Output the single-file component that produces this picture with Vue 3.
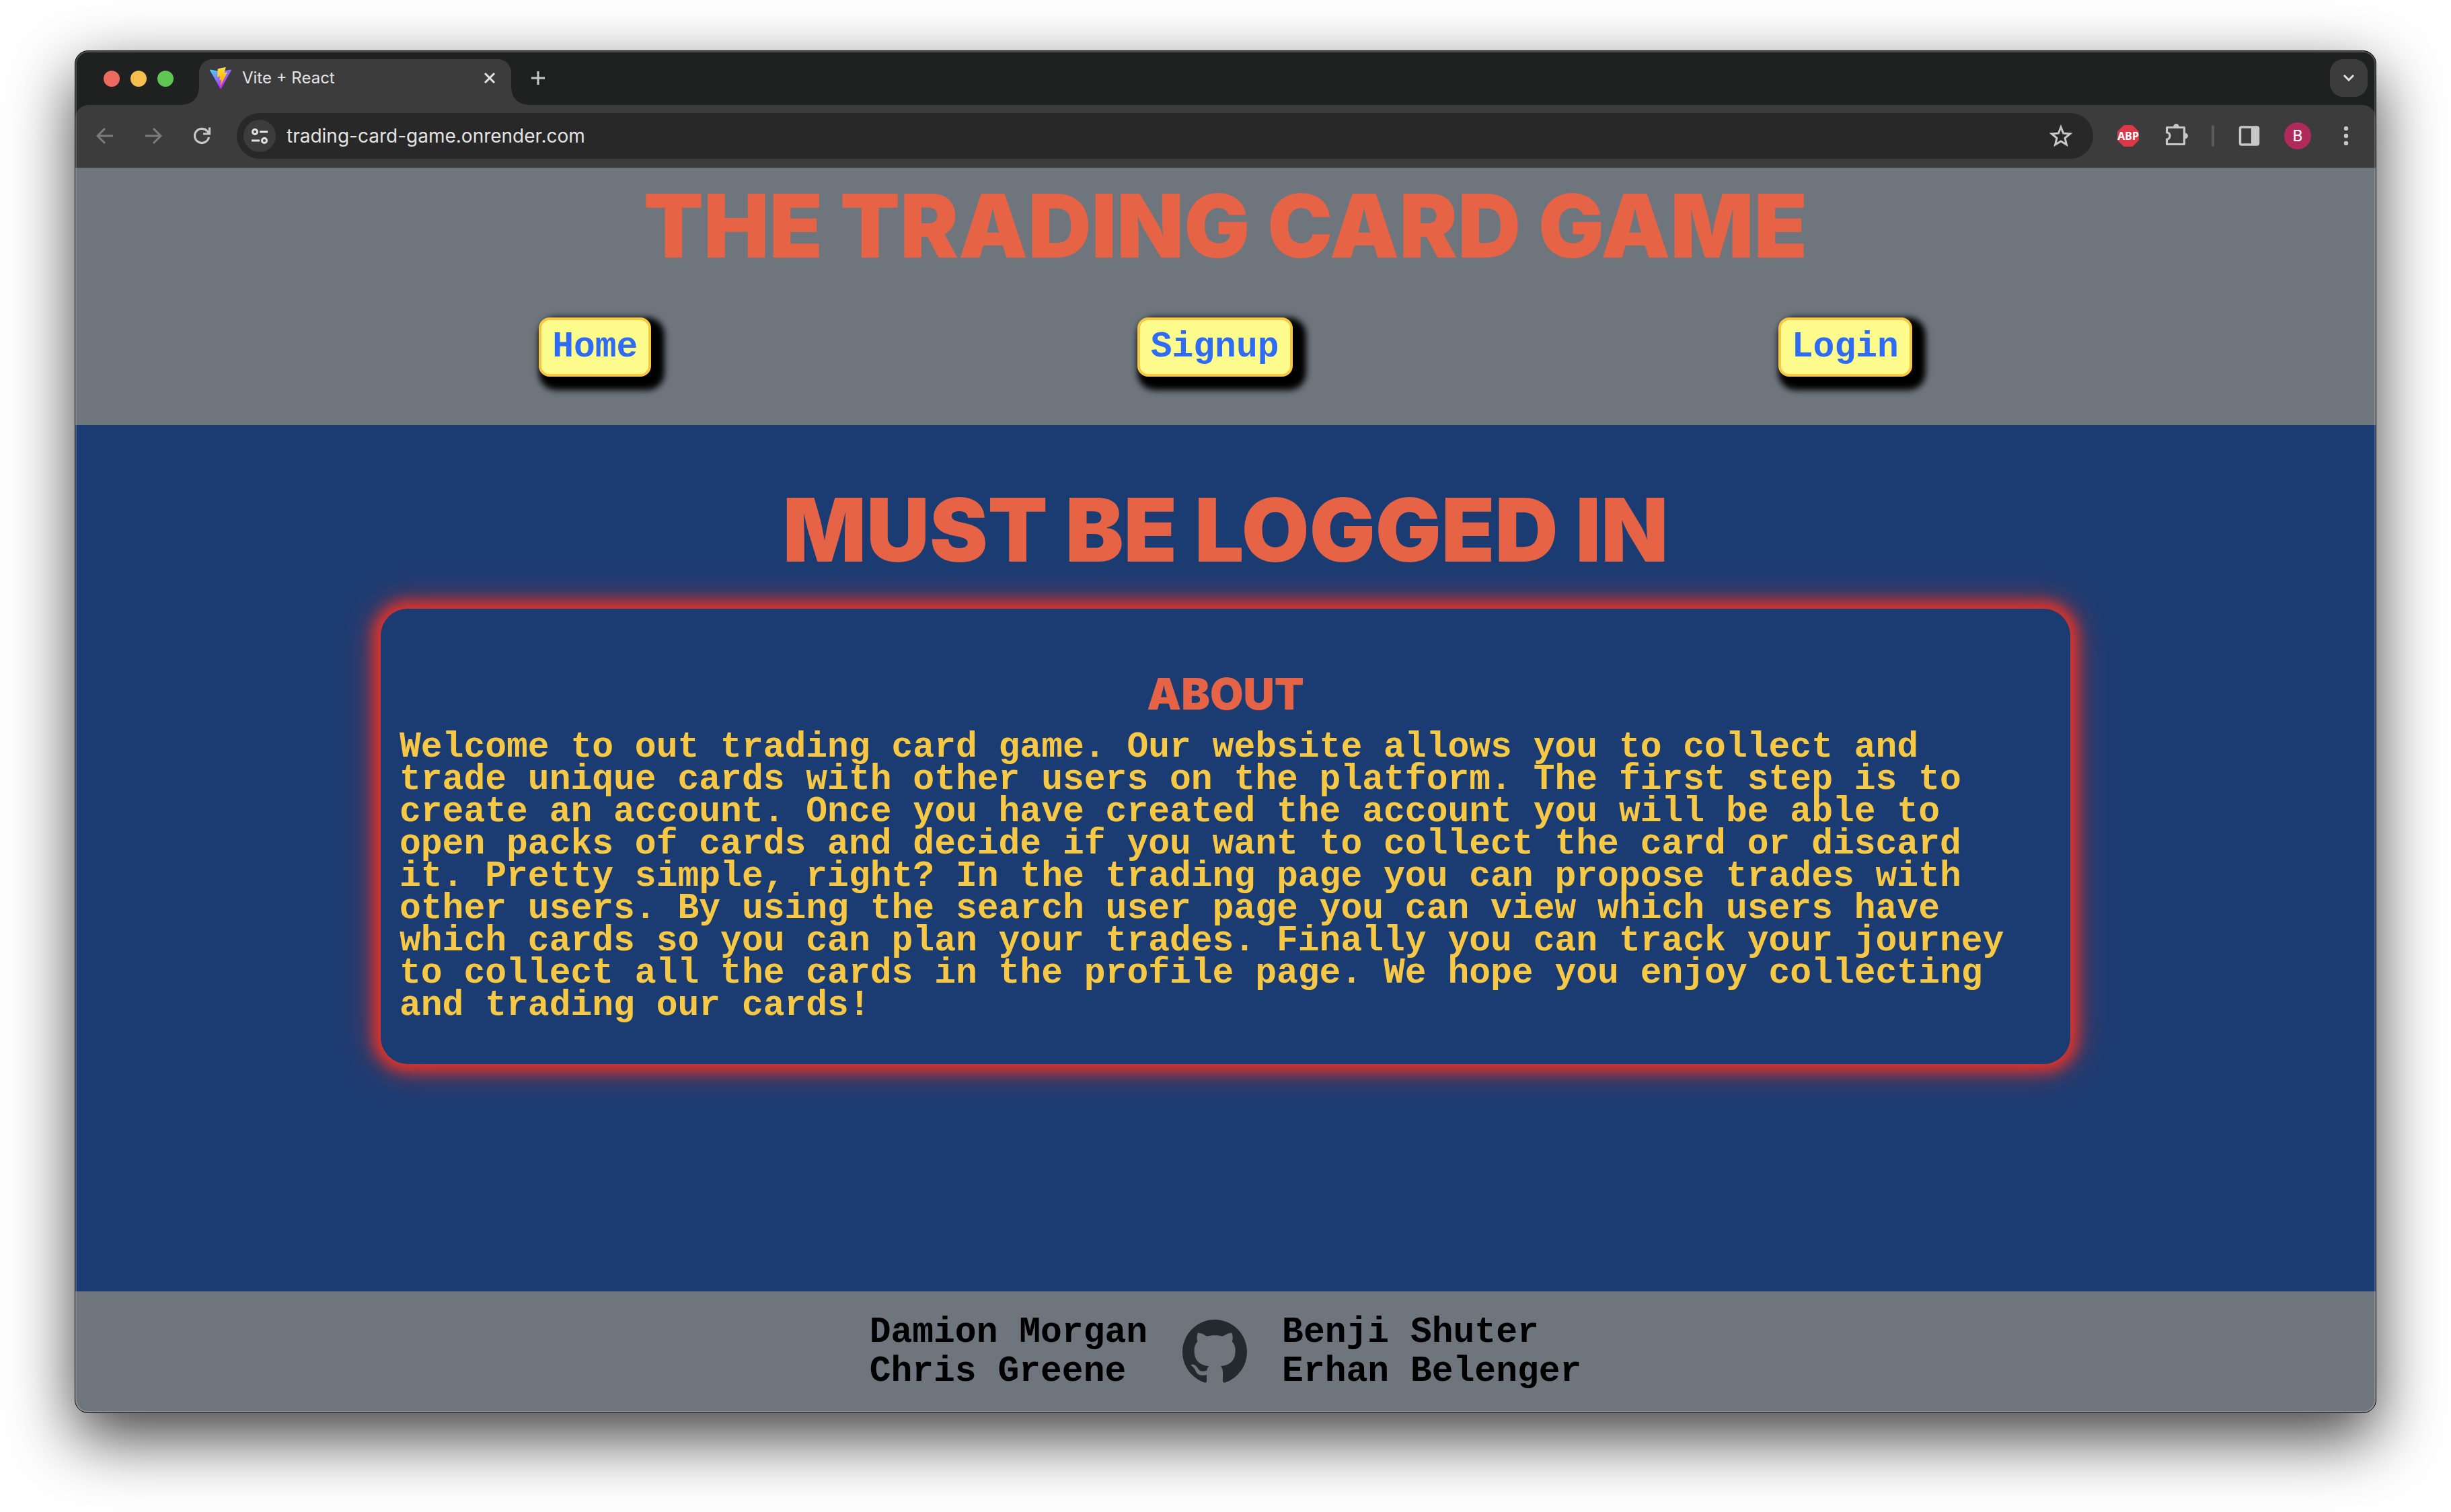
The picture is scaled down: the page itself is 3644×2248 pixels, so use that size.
<script setup>
import { ref } from 'vue'

const address = ref('trading-card-game.onrender.com')
const links = ['Home', 'Signup', 'Login']
const authors = [
  ['Damion Morgan', 'Chris Greene'],
  ['Benji Shuter', 'Erhan Belenger'],
]
</script>

<template>
  <div class="window">
    <div class="tab-strip">
      <div class="lights">
        <span class="light red"></span>
        <span class="light amber"></span>
        <span class="light green"></span>
      </div>
      <div class="tab">
        <svg class="favicon" viewBox="0 0 256 257" aria-hidden="true">
          <defs>
            <linearGradient id="vite-shield" x1="-.8%" x2="57.6%" y1="7.7%" y2="78.4%">
              <stop offset="0" stop-color="#41d1ff" />
              <stop offset="1" stop-color="#bd34fe" />
            </linearGradient>
            <linearGradient id="vite-bolt" x1="43.4%" x2="50.3%" y1="2.2%" y2="89%">
              <stop offset="0" stop-color="#ffea83" />
              <stop offset=".08" stop-color="#ffdd35" />
              <stop offset="1" stop-color="#ffa800" />
            </linearGradient>
          </defs>
          <path fill="url(#vite-shield)" d="M255.153 37.938 134.897 252.976c-2.483 4.44-8.862 4.466-11.382.048L.875 37.958c-2.746-4.814 1.371-10.646 6.827-9.67l120.385 21.517a6.537 6.537 0 0 0 2.322-.004l117.867-21.483c5.438-.991 9.574 4.796 6.877 9.62Z" />
          <path fill="url(#vite-bolt)" d="M185.432.063 96.44 17.501a3.268 3.268 0 0 0-2.634 3.014l-5.474 92.456a3.268 3.268 0 0 0 3.997 3.378l24.777-5.718c2.318-.535 4.413 1.507 3.936 3.838l-7.361 36.047c-.495 2.426 1.782 4.5 4.151 3.78l15.304-4.649c2.372-.72 4.652 1.36 4.15 3.788l-11.698 56.621c-.732 3.542 3.979 5.473 5.943 2.437l1.313-2.028 72.516-144.72c1.215-2.423-.88-5.186-3.54-4.672l-25.505 4.922c-2.396.462-4.435-1.77-3.759-4.114l16.646-57.705c.677-2.35-1.37-4.583-3.769-4.113Z" />
        </svg>
        <span class="tab-title">Vite + React</span>
        <button class="icon-button" aria-label="Close tab">
          <svg width="20" height="20" viewBox="0 0 20 20"><path d="M3 3l14 14M17 3L3 17" stroke="#e3e3e3" stroke-width="3" /></svg>
        </button>
      </div>
      <button class="icon-button new-tab" aria-label="New tab">
        <svg width="20" height="20" viewBox="0 0 20 20"><path d="M10 0v20M0 10h20" stroke="#c7c7c7" stroke-width="3" /></svg>
      </button>
      <button class="icon-button tab-search" aria-label="Search tabs">
        <svg width="20" height="20" viewBox="0 0 20 20"><path d="M3 6l7 7 7-7" fill="none" stroke="#e3e3e3" stroke-width="3" /></svg>
      </button>
    </div>

    <div class="toolbar">
      <button class="icon-button" aria-label="Back">
        <svg width="40" height="40" viewBox="0 0 40 40"><path d="M32 20H10M20 9L9 20l11 11" fill="none" stroke="#7c7c7c" stroke-width="3" /></svg>
      </button>
      <button class="icon-button" aria-label="Forward">
        <svg width="40" height="40" viewBox="0 0 40 40"><path d="M8 20h22M20 9l11 11-11 11" fill="none" stroke="#7c7c7c" stroke-width="3" /></svg>
      </button>
      <button class="icon-button" aria-label="Reload">
        <svg width="40" height="40" viewBox="0 0 40 40"><path d="M30.500 22A10.600 10.600 0 1 1 28 12.800l2.500 2.700M31.500 7.500v9.500h-9.500" fill="none" stroke="#c7c7c7" stroke-width="3.200" /></svg>
      </button>
      <div class="omnibox">
        <button class="icon-button site-info" aria-label="View site information">
          <svg width="28" height="28" viewBox="0 0 28 28" fill="none" stroke="#e3e3e3" stroke-width="3"><circle cx="7" cy="8" r="3.500" /><path d="M14 8h12M2 21h12" /><circle cx="21" cy="21" r="3.500" /></svg>
        </button>
        <input v-model="address" class="address" type="text" aria-label="Address" />
        <button class="icon-button" aria-label="Bookmark this page">
          <svg width="40" height="40" viewBox="0 0 40 40"><path d="M20 7l3.700 9.200 9.900.8-7.600 6.400 2.400 9.700-8.400-5.200-8.400 5.200 2.400-9.700L6.400 17l9.900-.8z" fill="none" stroke="#c7c7c7" stroke-width="3" /></svg>
        </button>
      </div>
      <button class="icon-button" aria-label="Ad blocker">
        <svg width="40" height="40" viewBox="0 0 40 40"><path d="M13.500 4h13L36 13.500v13L26.500 36h-13L4 26.500v-13z" fill="#dc3848" /><text x="20" y="26" text-anchor="middle" font-family="Noto Sans, sans-serif" font-weight="700" font-size="16" fill="#fff">ABP</text></svg>
      </button>
      <button class="icon-button" aria-label="Extensions">
        <svg width="40" height="40" viewBox="0 0 40 40"><path d="M7.500 7.500h24v25h-26v-7.500c6 0 6-10 0-10V7.500z" fill="none" stroke="#c7c7c7" stroke-width="3.200" stroke-linejoin="round" /><path d="M15 7a4.500 5 0 0 1 9 0zM32 15.500a5 4.500 0 0 1 0 9z" fill="#c7c7c7" /></svg>
      </button>
      <span class="divider"></span>
      <button class="icon-button" aria-label="Side panel">
        <svg width="40" height="40" viewBox="0 0 40 40"><rect x="6.500" y="7" width="27" height="26" rx="2" fill="none" stroke="#c7c7c7" stroke-width="3.500" /><path d="M23 6h11v28H23z" fill="#c7c7c7" /></svg>
      </button>
      <button class="icon-button avatar" aria-label="Profile">B</button>
      <button class="icon-button" aria-label="Menu">
        <svg width="40" height="40" viewBox="0 0 40 40" fill="#c7c7c7"><circle cx="20" cy="9" r="3.200" /><circle cx="20" cy="20" r="3.200" /><circle cx="20" cy="31" r="3.200" /></svg>
      </button>
    </div>

    <header class="site-header">
      <h1 class="display site-title">THE TRADING CARD GAME</h1>
      <nav class="site-nav">
        <a v-for="link in links" :key="link" class="nav-link" href="#">{{ link }}</a>
      </nav>
    </header>

    <main class="site-main">
      <h1 class="display page-title">MUST BE LOGGED IN</h1>
      <section class="about">
        <h2 class="display about-title">ABOUT</h2>
        <p class="about-text">
          Welcome to out trading card game. Our website allows you to collect and
          trade unique cards with other users on the platform. The first step is to
          create an account. Once you have created the account you will be able to
          open packs of cards and decide if you want to collect the card or discard
          it. Pretty simple, right? In the trading page you can propose trades with
          other users. By using the search user page you can view which users have
          which cards so you can plan your trades. Finally you can track your journey
          to collect all the cards in the profile page. We hope you enjoy collecting
          and trading our cards!
        </p>
      </section>
    </main>

    <footer class="site-footer">
      <div class="authors">
        <span v-for="name in authors[0]" :key="name">{{ name }}</span>
      </div>
      <a class="github" href="#" aria-label="GitHub">
        <svg width="96" height="96" viewBox="0 0 16 16" fill="#24292e"><path d="M8 0C3.580 0 0 3.580 0 8c0 3.540 2.290 6.530 5.470 7.590.4.070.55-.17.55-.38 0-.19-.01-.82-.01-1.490-2.010.37-2.530-.49-2.690-.94-.09-.23-.48-.94-.82-1.130-.28-.15-.68-.52-.01-.53.63-.01 1.080.58 1.230.82.72 1.210 1.870.87 2.330.66.07-.52.28-.87.51-1.070-1.780-.2-3.640-.89-3.640-3.950 0-.87.31-1.590.82-2.150-.08-.2-.36-1.020.08-2.120 0 0 .67-.21 2.200.82.64-.18 1.320-.27 2-.27s1.360.09 2 .27c1.530-1.040 2.200-.82 2.200-.82.44 1.100.16 1.920.08 2.120.51.56.82 1.270.82 2.150 0 3.070-1.870 3.750-3.650 3.950.29.25.54.73.54 1.480 0 1.070-.01 1.930-.01 2.200 0 .21.15.46.55.38A8.010 8.010 0 0 0 16 8c0-4.420-3.580-8-8-8z" /></svg>
      </a>
      <div class="authors">
        <span v-for="name in authors[1]" :key="name">{{ name }}</span>
      </div>
    </footer>
  </div>
</template>

<style>
body {
  margin: 0;
  background: #fff;
}

#app {
  display: flow-root;
}
</style>

<style scoped>
.window {
  position: relative;
  box-sizing: border-box;
  display: flex;
  flex-direction: column;
  min-height: calc(100vh - 222px);
  margin: 75px 111px 147px;
  border: 1px solid #000;
  border-radius: 20px;
  background: #1f2120;
  box-shadow: 0 36px 96px rgba(0, 0, 0, 0.75);
  font-family: Inter, sans-serif;
}

.window::after {
  content: '';
  position: absolute;
  inset: 0;
  border-radius: 19px;
  box-shadow: inset 0 0 0 2px rgba(255, 255, 255, 0.2);
  pointer-events: none;
}

.icon-button {
  display: flex;
  align-items: center;
  justify-content: center;
  padding: 0;
  border: 0;
  background: none;
}

.tab-strip {
  display: flex;
  align-items: center;
  height: 68px;
  padding: 12px 12px 0 42px;
}

.lights {
  display: flex;
  gap: 16px;
  margin: 0 38px 10px 0;
}

.light {
  width: 24px;
  height: 24px;
  border-radius: 50%;
}

.red { background: #ed6a5e; }
.amber { background: #f5bf4f; }
.green { background: #61c554; }

.tab {
  position: relative;
  box-sizing: border-box;
  display: flex;
  align-items: center;
  width: 464px;
  height: 68px;
  padding: 0 22px 12px 16px;
  border-radius: 20px 20px 0 0;
  background: #3c3c3c;
}

.tab::before,
.tab::after {
  content: '';
  position: absolute;
  bottom: 0;
  width: 24px;
  height: 24px;
}

.tab::before {
  right: 100%;
  background: radial-gradient(circle at 0 0, transparent 23px, #3c3c3c 24px);
}

.tab::after {
  left: 100%;
  background: radial-gradient(circle at 100% 0, transparent 23px, #3c3c3c 24px);
}

.favicon {
  width: 32px;
  height: 32px;
}

.tab-title {
  flex: 1;
  margin-left: 16px;
  color: #e3e3e3;
  font-size: 24px;
  line-height: 32px;
}

.new-tab {
  margin: 0 auto 12px 30px;
}

.tab-search {
  width: 56px;
  height: 56px;
  margin-bottom: 12px;
  border-radius: 20px;
  background: #3c3c3c;
}

.toolbar {
  display: flex;
  align-items: center;
  gap: 32px;
  height: 92px;
  padding: 0 24px;
  border-bottom: 2px solid #474747;
  border-radius: 20px 20px 0 0;
  background: #3c3c3c;
}

.omnibox {
  box-sizing: border-box;
  display: flex;
  flex: 1;
  align-items: center;
  gap: 16px;
  height: 68px;
  padding: 0 28px 0 10px;
  border-radius: 34px;
  background: #282828;
}

.site-info {
  width: 48px;
  height: 48px;
  border-radius: 50%;
  background: #3c3c3c;
}

.address {
  flex: 1;
  padding: 0;
  border: 0;
  outline: 0;
  background: none;
  color: #e3e3e3;
  font: 28px/40px Inter, sans-serif;
}

.divider {
  width: 4px;
  height: 32px;
  border-radius: 2px;
  background: #5c5c5c;
}

.avatar {
  width: 40px;
  height: 40px;
  border-radius: 50%;
  background: #b02a5b;
  color: #fff;
  font: 24px/40px Roboto, sans-serif;
}

.display {
  margin: 0;
  color: #e76345;
  font-weight: 900;
  text-align: center;
}

.site-title,
.page-title {
  font-size: 130px;
  line-height: 128px;
}

.site-header {
  display: flex;
  flex-direction: column;
  gap: 72px;
  padding: 22px 0 72px;
  background: #6e757d;
}

.site-nav {
  display: flex;
  justify-content: space-around;
  padding: 0 328px;
}

.nav-link {
  padding: 16px;
  border: 4px solid #f7c843;
  border-radius: 16px;
  background: #fefb8d;
  box-shadow: 10px 10px 10px 10px #000;
  color: #2f6cf6;
  font: bold 53px/48px 'Liberation Mono', monospace;
  text-decoration: none;
}

.site-main {
  flex: 1;
  padding: 92px 454px;
  background: #1b3c72;
}

.about {
  margin-top: 53px;
  padding: 95px 28px 63px;
  border-radius: 40px;
  background: #1b3c72;
  box-shadow: 0 0 20px 10px #e0332a, 0 0 50px 10px rgba(224, 51, 42, 0.6);
}

.about-title {
  font-size: 64px;
  line-height: 64px;
}

.about-text {
  margin: 23px 40px 0 0;
  color: #f7c843;
  font: bold 53px/48px 'Liberation Mono', monospace;
}

.site-footer {
  display: flex;
  align-items: center;
  justify-content: center;
  gap: 52px;
  height: 180px;
  border-radius: 0 0 19px 19px;
  background: #6e757d;
}

.authors {
  display: flex;
  flex-direction: column;
  color: #000;
  font: bold 53px/58px 'Liberation Mono', monospace;
}

.github {
  display: flex;
}
</style>
